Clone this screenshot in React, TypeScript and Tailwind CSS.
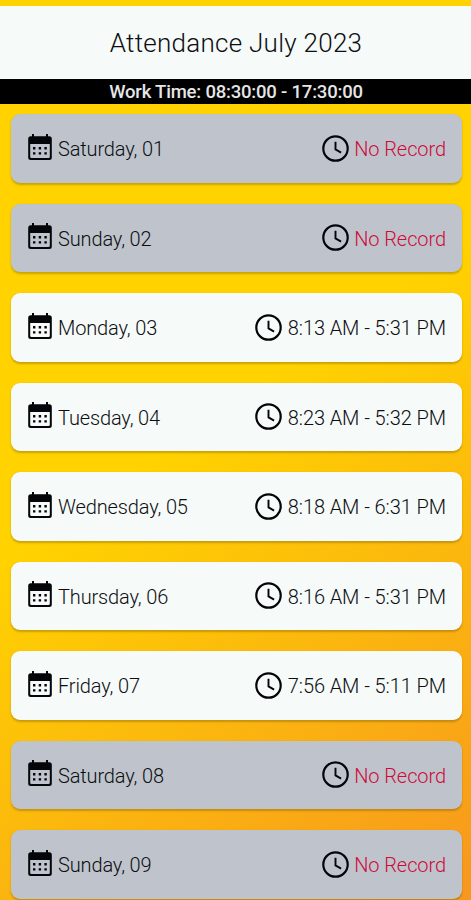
type Day = { label: string; time?: string };

const days: Day[] = [
  { label: "Saturday, 01" },
  { label: "Sunday, 02" },
  { label: "Monday, 03", time: "8:13 AM - 5:31 PM" },
  { label: "Tuesday, 04", time: "8:23 AM - 5:32 PM" },
  { label: "Wednesday, 05", time: "8:18 AM - 6:31 PM" },
  { label: "Thursday, 06", time: "8:16 AM - 5:31 PM" },
  { label: "Friday, 07", time: "7:56 AM - 5:11 PM" },
  { label: "Saturday, 08" },
  { label: "Sunday, 09" },
];

function CalendarIcon() {
  return (
    <svg className="mb-[3px] h-[26px] w-6 shrink-0" viewBox="0 0 24 26" fill="#030508">
      <path
        fillRule="evenodd"
        d="M4 0h2v2.2h12V0h2v2.2h1.3A2.5 2.5 0 0 1 23.8 4.7v18.8a2.5 2.5 0 0 1-2.5 2.5H2.7a2.5 2.5 0 0 1-2.5-2.5V4.7a2.5 2.5 0 0 1 2.5-2.5H4ZM2.2 9.9v12.8q0 1.3 1.3 1.3h17q1.3 0 1.3-1.3V9.9Z"
      />
      <path d="M5 13h2.4v2.4H5zM10.7 13h2.4v2.4h-2.4zM16.4 13h2.4v2.4h-2.4zM5 18.2h2.4v2.4H5zM10.7 18.2h2.4v2.4h-2.4zM16.4 18.2h2.4v2.4h-2.4z" />
    </svg>
  );
}

function ClockIcon() {
  return (
    <svg className="size-[27px] shrink-0" viewBox="0 0 27 27" fill="none" stroke="#030508">
      <circle cx="13.5" cy="13.5" r="12.2" strokeWidth="2.2" />
      <path d="M13.5 6.8v7.6l5.6 3.2" strokeWidth="1.9" />
    </svg>
  );
}

function DayCard({ label, time }: Day) {
  return (
    <li
      className={`flex h-[68.5px] shrink-0 items-center justify-between rounded-[9px] pr-[15.5px] pl-[17px] shadow-[0_1.5px_2px_rgba(90,70,0,0.32)] ${
        time ? "bg-[#f6faf9]" : "bg-[#bfc4cc]"
      }`}
    >
      <div className="flex items-center gap-[6px]">
        <CalendarIcon />
        <span className="pt-[2px] text-[20px] leading-6 tracking-[-0.14px] text-[#0c0e11]">{label}</span>
      </div>
      <div className="flex items-center gap-[5.5px]">
        <ClockIcon />
        <span
          className={`pt-[2px] text-[20px] leading-6 tracking-[-0.08px] ${time ? "text-[#0c0e11]" : "text-[#ce0a3a]"}`}
        >
          {time ?? "No Record"}
        </span>
      </div>
    </li>
  );
}

export default function App() {
  return (
    <main className="flex h-[900px] w-full flex-col overflow-hidden bg-[linear-gradient(145deg,#ffd200_0%,#ffd200_46%,#f7971e_100%)] pt-[5.5px] font-['Roboto',sans-serif] font-light">
      <header className="flex h-[73.5px] shrink-0 items-center justify-center bg-[#f6faf9] pt-[2px] pl-px">
        <h1 className="text-[26px] leading-8 tracking-[0.27px] text-[#0c0e11]">Attendance July 2023</h1>
      </header>
      <div className="flex h-[24.5px] shrink-0 items-center justify-center bg-black pt-[2px] pl-px text-[18.5px] leading-6 font-medium tracking-[-0.2px] text-[#e6e6e6]">
        Work Time: 08:30:00 - 17:30:00
      </div>
      <ul className="flex flex-col gap-[21px] pt-[10.7px] pr-[9.5px] pl-[11px]">
        {days.map((day) => (
          <DayCard key={day.label} {...day} />
        ))}
      </ul>
    </main>
  );
}
